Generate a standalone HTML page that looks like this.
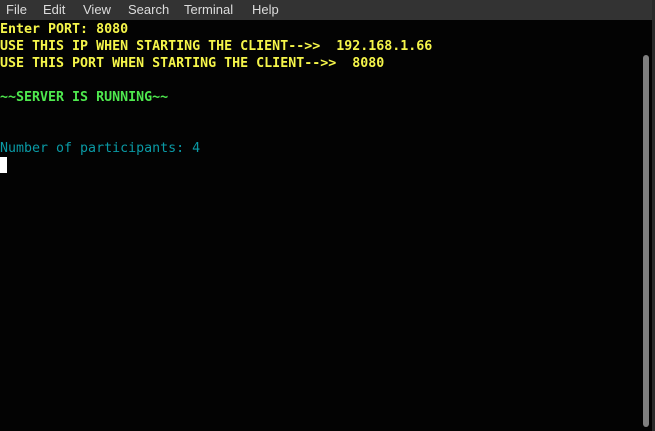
<!DOCTYPE html>
<html><head><style>
html,body{margin:0;padding:0;width:655px;height:431px;overflow:hidden;background:#030303;}
.menu{position:absolute;left:0;top:0;width:652px;height:20px;background:#333333;font-family:"Liberation Sans",sans-serif;font-size:13px;color:#dcdcdc;}
.menu span{position:absolute;top:2px;}
.edge{position:absolute;right:0;top:0;width:3px;height:431px;background:#2a2a2a;}
.sb{position:absolute;left:643px;top:55px;width:6px;height:372px;background:#7f7f7f;border-radius:3px;}
.t{position:absolute;left:0;font-family:"DejaVu Sans Mono","Liberation Mono",monospace;font-size:13.3px;line-height:17px;white-space:pre;}
.y{color:#f5f54a;font-weight:bold}
.g{color:#4ee84e;font-weight:bold}
.c{color:#0a9aa5}
.cur{position:absolute;left:0;top:157px;width:7px;height:16px;background:#fff;}
</style></head><body>
<div class="menu"><span style="left:6px">File</span><span style="left:43px">Edit</span><span style="left:83px">View</span><span style="left:128px">Search</span><span style="left:184px">Terminal</span><span style="left:252px">Help</span></div>
<div class="edge"></div>
<div class="t y" style="top:21px">Enter PORT: 8080</div>
<div class="t y" style="top:38px">USE THIS IP WHEN STARTING THE CLIENT-->>  192.168.1.66</div>
<div class="t y" style="top:55px">USE THIS PORT WHEN STARTING THE CLIENT-->>  8080</div>
<div class="t g" style="top:89px">~~SERVER IS RUNNING~~</div>
<div class="t c" style="top:140px">Number of participants: 4</div>
<div class="cur"></div>
<div class="sb"></div>
</body></html>
